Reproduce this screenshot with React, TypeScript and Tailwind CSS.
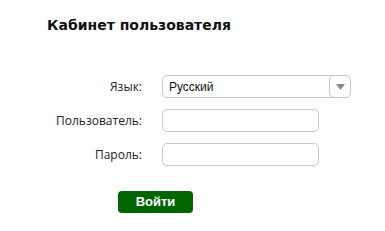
import React from "react";

export default function App() {
  const label = "text-right text-[12px] text-[#222] pr-[20px] leading-[23px]";
  const input =
    "h-[23px] w-[157px] rounded-[5px] border border-[#c8c8c8] bg-white";
  return (
    <div
      className="w-[385px] h-[231px] bg-white relative"
      style={{ fontFamily: '"Open Sans", "Liberation Sans", sans-serif' }}
    >
      <div
        className="pl-[47px] pt-[16px] text-[14px] font-bold text-[#111] leading-[18px]"
        style={{ fontFamily: '"DejaVu Sans", Verdana, sans-serif' }}
      >
        Кабинет пользователя
      </div>
      <div className="grid grid-cols-[162px_auto] gap-y-[11px] mt-[41px]">
        <div className={label}>Язык:</div>
        <div className="relative h-[23px] w-[189px] rounded-[5px] border border-[#c8c8c8] bg-white flex items-center">
          <span
            className="pl-[6px] text-[12px] text-[#111]"
            style={{ fontFamily: '"Liberation Sans", Arial, sans-serif' }}
          >
            Русский
          </span>
          <div className="absolute right-[-1px] top-[-1px] h-[23px] w-[22px] rounded-[5px] border border-[#c8c8c8] bg-white flex items-center justify-center">
            <svg width="9" height="6" viewBox="0 0 9 6">
              <path d="M0 0H9L4.5 6Z" fill="#8a8a8a" />
            </svg>
          </div>
        </div>
        <div className={label}>Пользователь:</div>
        <div className={input} />
        <div className={label}>Пароль:</div>
        <div className={input} />
      </div>
      <div className="pl-[118px] mt-[22px]">
        <button
          className="h-[22px] w-[75px] rounded-[4px] bg-[#006400] text-white text-[13px] font-bold leading-[22px]"
          style={{ fontFamily: '"Liberation Sans", Arial, sans-serif' }}
        >
          Войти
        </button>
      </div>
    </div>
  );
}
